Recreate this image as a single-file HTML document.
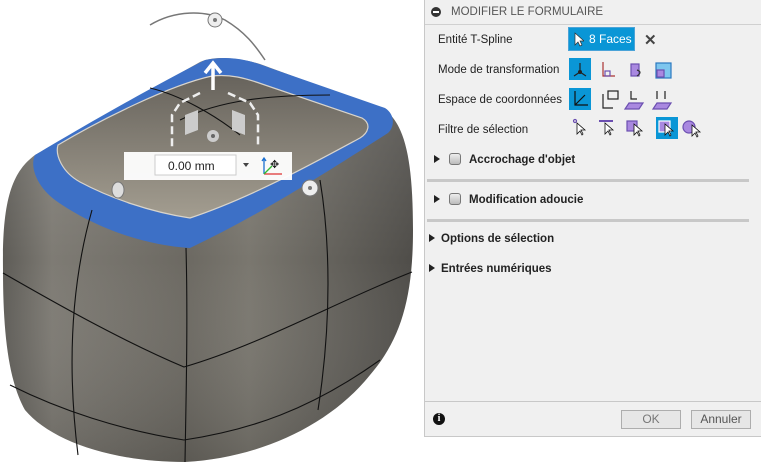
<!DOCTYPE html>
<html><head><meta charset="utf-8"><style>
*{margin:0;padding:0;box-sizing:border-box}
body{width:761px;height:467px;background:#fff;position:relative;overflow:hidden;font-family:"Liberation Sans",sans-serif;font-size:12px;color:#222}
#panel{position:absolute;left:424px;top:0;width:337px;height:437px;background:#f0f0f0;border-left:1px solid #c8c8c8;border-bottom:1px solid #c8c8c8}
.hdr{height:25px;border-bottom:1px solid #d0d0d0;display:flex;align-items:center;padding-left:6px;color:#555;font-size:11.5px}
.hdr i{width:10px;height:10px;border-radius:50%;background:#333;display:inline-block;margin-right:10px;position:relative}
.hdr i:after{content:"";position:absolute;left:2px;top:4px;width:6px;height:2px;background:#fff}
.row{position:absolute;left:13px;font-size:11.5px}
.ib{position:absolute;width:22px;height:22px}
.ib.on{background:#0a96d6}
.tri{display:inline-block;width:0;height:0;border-left:6px solid #222;border-top:4px solid transparent;border-bottom:4px solid transparent;margin-right:9px}
.cb{display:inline-block;width:12px;height:12px;border:1px solid #777;border-radius:3px;background:linear-gradient(#eee,#bbb);vertical-align:-2px;margin-right:8px}
.sec{position:absolute;font-weight:bold;font-size:11.5px;color:#222}
.sep{position:absolute;left:2px;width:322px;height:3px;background:#c8c8c8}
.btn{position:absolute;top:410px;height:19px;border:1px solid #adadad;background:#e6e6e6;color:#777;font-size:12px;text-align:center;line-height:17px}
</style></head><body>
<svg width="424" height="467" style="position:absolute;left:0;top:0">
<defs>
<linearGradient id="g" x1="0" y1="0" x2="1" y2="0"><stop offset="0" stop-color="#5e5c57"/><stop offset="0.12" stop-color="#7e7b74"/><stop offset="0.45" stop-color="#6c6962"/><stop offset="0.6" stop-color="#7a776f"/><stop offset="1" stop-color="#4f4d49"/></linearGradient>
<linearGradient id="v" x1="0" y1="0" x2="0" y2="1"><stop offset="0" stop-color="#fff" stop-opacity="0.15"/><stop offset="0.5" stop-color="#fff" stop-opacity="0"/><stop offset="1" stop-color="#000" stop-opacity="0.15"/></linearGradient>
<linearGradient id="t" x1="0" y1="0" x2="0" y2="1"><stop offset="0" stop-color="#67635c"/><stop offset="1" stop-color="#a39d90"/></linearGradient>
</defs>
<path d="M3,270 C2,200 12,172 35,155 L200,62 C215,55 240,58 260,64 L385,110 C405,125 413,160 413,230 C413,300 400,340 370,375 C330,425 260,458 185,462 C110,462 50,440 25,410 C8,380 3,330 3,270Z" fill="url(#g)"/>
<path d="M3,270 C2,200 12,172 35,155 L200,62 C215,55 240,58 260,64 L385,110 C405,125 413,160 413,230 C413,300 400,340 370,375 C330,425 260,458 185,462 C110,462 50,440 25,410 C8,380 3,330 3,270Z" fill="url(#v)"/>
<path d="M35,155 C80,128 150,88 205,60 C230,55 250,60 270,68 L385,108 C396,115 394,128 388,133 C330,170 260,215 190,248 C140,245 90,225 55,200 C35,185 30,165 35,155Z" fill="#3d70c6"/>
<path d="M58,145 C100,120 170,85 212,76 C230,74 245,78 262,84 L362,118 C372,124 368,133 360,138 C310,165 250,198 190,218 C150,212 110,198 80,182 C62,172 55,155 58,145Z" fill="url(#t)" stroke="#d8d4cc" stroke-width="1.2"/>
<g fill="none" stroke="#111" stroke-width="1.1">
<path d="M186,248 C188,320 186,400 185,462"/>
<path d="M92,210 C75,270 65,350 78,455"/>
<path d="M320,180 C330,240 332,320 318,410"/>
<path d="M3,273 C50,300 120,340 184,367 C260,345 340,300 412,272"/>
<path d="M10,385 C60,410 120,430 184,440 C250,430 310,410 380,360"/>
<path d="M150,88 C180,95 215,115 240,135"/>
<path d="M180,120 C220,100 270,95 330,95"/>
</g>
<path d="M150,25 C175,10 205,10 225,20 C245,32 255,45 265,60" fill="none" stroke="#777" stroke-width="1.5"/>
<circle cx="215" cy="20" r="7" fill="#eee" stroke="#777"/><circle cx="215" cy="20" r="2" fill="#777"/>
<ellipse cx="118" cy="190" rx="6" ry="8" fill="#ddd" stroke="#777"/>
<circle cx="310" cy="188" r="8" fill="#eee" stroke="#777"/><circle cx="310" cy="188" r="2" fill="#777"/>
<path d="M213,90 V65 M205,73 L213,63 L221,73" stroke="#fff" stroke-width="3.5" fill="none"/>
<path d="M200,93 L180,103 L172,115 V148 M228,93 L250,103 L258,115 V148" stroke="#eee" stroke-width="2.5" stroke-dasharray="8,4" fill="none"/>
<path d="M185,115 L198,110 V130 L185,135Z M232,110 L245,115 V135 L232,130Z" fill="#ccc"/>
<circle cx="213" cy="136" r="6" fill="#ccc"/><circle cx="213" cy="136" r="2" fill="#666"/>
<rect x="124" y="152" width="168" height="28" fill="#fff" opacity="0.95"/>
<rect x="155" y="155" width="81" height="20" fill="#fff" stroke="#ccc"/>
<text x="168" y="170" font-family="Liberation Sans" font-size="12" fill="#222">0.00 mm</text>
<path d="M243,163 h6 l-3,4z" fill="#444"/>
<path d="M264,174 V158 M262,161 l2,-3 l2,3" stroke="#1a6fd0" stroke-width="1.3" fill="none"/>
<path d="M264,174 H282" stroke="#d33" stroke-width="1.3"/><path d="M264,174 L272,166" stroke="#3b3" stroke-width="1.3"/>
<text x="270" y="168" font-size="11" fill="#222">✥</text>
</svg>
<div id="panel">
<div class="hdr"><i></i>MODIFIER LE FORMULAIRE</div>
<div class="row" style="top:34px">Entité T-Spline</div>
<div style="position:absolute;left:143px;top:27px;width:67px;height:24px;background:#0a96d6;border:1px solid #4aa3d8;color:#fff;font-size:12px;line-height:22px;padding-left:20px">8 Faces</div>
<svg style="position:absolute;left:149px;top:32px" width="10" height="15"><path d="M1,1 V13 L4,10 L6,14 L8,13 L6,9 H10Z" fill="#fff" stroke="#333" stroke-width=".7"/></svg>
<div style="position:absolute;left:219px;top:31px;font-size:15px;font-weight:bold;color:#444">✕</div>
<div class="row" style="top:64px">Mode de transformation</div>
<div class="row" style="top:94px">Espace de coordonnées</div>
<div class="row" style="top:124px">Filtre de sélection</div>
<div class="ib on" style="left:144px;top:58px"></div>
<div class="ib on" style="left:144px;top:88px"></div>
<div class="ib on" style="left:231px;top:117px"></div>
<svg style="position:absolute;left:146px;top:58px" width="200" height="88" fill="none" stroke-width="1.2">
<path d="M9,5 V14 M3,18 L9,14 L15,18" stroke="#222"/><circle cx="9" cy="14" r="2" fill="#222"/>
<path d="M32,4 V18 H44 M32,4 V12" stroke="#a33"/><rect x="34" y="13" width="5" height="5" stroke="#6b4fb0"/>
<rect x="60" y="6" width="8" height="12" fill="#a988e0" stroke="#6b4fb0"/><path d="M66,12 q6,2 0,6" stroke="#333"/>
<rect x="85" y="5" width="15" height="15" fill="#7ec6ee" stroke="#2b79c0"/><rect x="86" y="12" width="7" height="7" fill="#a988e0" stroke="#6b4fb0"/>
<path d="M4,33 V47 H17 M4,47 L14,37" stroke="#111"/>
<path d="M32,36 V50 H42" stroke="#222"/><rect x="37" y="33" width="10" height="8" stroke="#222"/>
<path d="M58,45 L72,45 L68,51 L54,51Z" fill="#a988e0" stroke="#6b4fb0"/><path d="M60,33 V41 H66" stroke="#222"/>
<path d="M86,45 L100,45 L96,51 L82,51Z" fill="#a988e0" stroke="#6b4fb0"/><path d="M86,33 V41 M94,33 V41" stroke="#222"/>
<circle cx="4" cy="63" r="1.5" stroke="#6b4fb0"/><path d="M6,65 V76 L9,73 L11,77 L12,76 L10,72 H14Z" fill="#fff" stroke="#111" stroke-width=".8"/>
<path d="M28,63 H42" stroke="#6b4fb0" stroke-width="2"/><path d="M34,65 V76 L37,73 L39,77 L40,76 L38,72 H42Z" fill="#fff" stroke="#111" stroke-width=".8"/>
<rect x="56" y="63" width="10" height="10" fill="#a988e0" stroke="#6b4fb0"/><path d="M63,66 V77 L66,74 L68,78 L69,77 L67,73 H71Z" fill="#fff" stroke="#111" stroke-width=".8"/>
<rect x="88" y="63" width="11" height="11" fill="#a988e0" stroke="#fff"/><path d="M94,66 V77 L97,74 L99,78 L100,77 L98,73 H102Z" fill="#fff" stroke="#111" stroke-width=".8"/>
<ellipse cx="118" cy="69" rx="6" ry="6" fill="#a988e0" stroke="#6b4fb0"/><path d="M121,67 V78 L124,75 L126,79 L127,78 L125,74 H129Z" fill="#fff" stroke="#111" stroke-width=".8"/>
</svg>
<div class="sec" style="left:9px;top:153px"><span class="tri"></span><span class="cb"></span>Accrochage d'objet</div>
<div class="sep" style="top:179px"></div>
<div class="sec" style="left:9px;top:193px"><span class="tri"></span><span class="cb"></span>Modification adoucie</div>
<div class="sep" style="top:219px"></div>
<div class="sec" style="left:4px;top:233px"><span class="tri" style="margin-right:6px"></span>Options de sélection</div>
<div class="sec" style="left:4px;top:263px"><span class="tri" style="margin-right:6px"></span>Entrées numériques</div>
<div style="position:absolute;left:0;top:401px;width:336px;height:1px;background:#c8c8c8"></div>
<div style="position:absolute;left:8px;top:413px;width:12px;height:12px;border-radius:50%;background:#111;color:#fff;font-size:10px;font-weight:bold;text-align:center;line-height:12px;font-family:'Liberation Serif',serif">i</div>
<div class="btn" style="left:196px;width:60px">OK</div>
<div class="btn" style="left:266px;width:60px;color:#555">Annuler</div>
</div>
</body></html>
